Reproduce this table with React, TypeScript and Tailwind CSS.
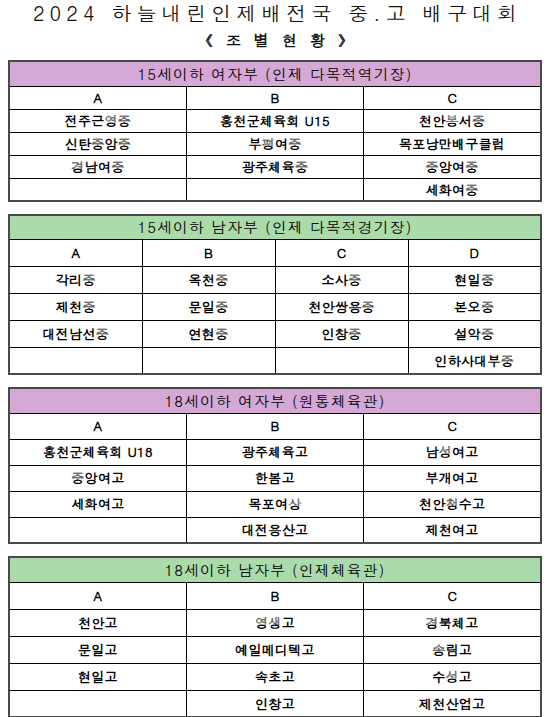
const font = "font-['Dotum','Gulim','Noto_Sans_CJK_KR',sans-serif]";

type Group = {
  title: string;
  color: string;
  heads: string[];
  widths: string[];
  rows: string[][];
  headH: string;
  rowH: string;
};

const groups: Group[] = [
  {
    title: "15세이하 여자부 (인제 다목적역기장)",
    color: "bg-[#d5a8d5]",
    heads: ["A", "B", "C"],
    widths: ["w-[177px]", "w-[178px]", "w-[179px]"],
    rows: [
      ["전주근영중", "홍천군체육회 U15", "천안봉서중"],
      ["신탄중앙중", "부평여중", "목포낭만배구클럽"],
      ["경남여중", "광주체육중", "중앙여중"],
      ["", "", "세화여중"],
    ],
    headH: "h-[25px]",
    rowH: "h-[23px]",
  },
  {
    title: "15세이하 남자부 (인제 다목적경기장)",
    color: "bg-[#abdaab]",
    heads: ["A", "B", "C", "D"],
    widths: ["w-[143px]", "w-[136px]", "w-[146px]", "w-[109px]"],
    rows: [
      ["각리중", "옥천중", "소사중", "현일중"],
      ["제천중", "문일중", "천안쌍용중", "본오중"],
      ["대전남선중", "연현중", "인창중", "설악중"],
      ["", "", "", "인하사대부중"],
    ],
    headH: "h-[24px]",
    rowH: "h-[27px]",
  },
  {
    title: "18세이하 여자부 (원통체육관)",
    color: "bg-[#d5a8d5]",
    heads: ["A", "B", "C"],
    widths: ["w-[179px]", "w-[179px]", "w-[176px]"],
    rows: [
      ["홍천군체육회 U18", "광주체육고", "남성여고"],
      ["중앙여고", "한봄고", "부개여고"],
      ["세화여고", "목포여상", "천안청수고"],
      ["", "대전용산고", "제천여고"],
    ],
    headH: "h-[25px]",
    rowH: "h-[26px]",
  },
  {
    title: "18세이하 남자부 (인제체육관)",
    color: "bg-[#abdaab]",
    heads: ["A", "B", "C"],
    widths: ["w-[179px]", "w-[179px]", "w-[176px]"],
    rows: [
      ["천안고", "영생고", "경북체고"],
      ["문일고", "예일메디텍고", "송림고"],
      ["현일고", "속초고", "수성고"],
      ["", "인창고", "제천산업고"],
    ],
    headH: "h-[25px]",
    rowH: "h-[27px]",
  },
];

function GroupTable({ g }: { g: Group }) {
  return (
    <table className="w-[534px] border-collapse border-2 border-[#4a4a4a] table-fixed">
      <thead>
        <tr className={g.headH}>
          <th colSpan={g.heads.length} className={`${g.color} border border-black text-[15px] tracking-[1px] font-normal text-black p-0`}>
            {g.title}
          </th>
        </tr>
        <tr className={g.rowH}>
          {g.heads.map((h, i) => (
            <th key={h} className={`${g.widths[i]} border border-black text-[13px] font-bold text-black p-0`}>
              {h}
            </th>
          ))}
        </tr>
      </thead>
      <tbody>
        {g.rows.map((r, ri) => (
          <tr key={ri} className={g.rowH}>
            {r.map((c, ci) => (
              <td key={ci} className="border border-black text-center text-[13px] tracking-[0.3px] font-bold text-black p-0">
                {c}
              </td>
            ))}
          </tr>
        ))}
      </tbody>
    </table>
  );
}

export default function App() {
  return (
    <main className={`w-[555px] min-h-[717px] bg-white ${font}`}>
      <header className="h-[60px] flex flex-col items-center pt-[2px]">
        <h1 className="text-[20px] leading-[22px] font-semibold tracking-[5px] text-[#111]">
          2024 하늘내린인제배전국 중.고 배구대회
        </h1>
        <p className="mt-[6px] text-[15px] leading-[20px] font-bold tracking-[4px] text-[#111]">
          《 조 별 현 황 》
        </p>
      </header>
      <div className="pl-[8px] flex flex-col gap-[12px]">
        {groups.map((g) => (
          <GroupTable key={g.title} g={g} />
        ))}
      </div>
    </main>
  );
}
